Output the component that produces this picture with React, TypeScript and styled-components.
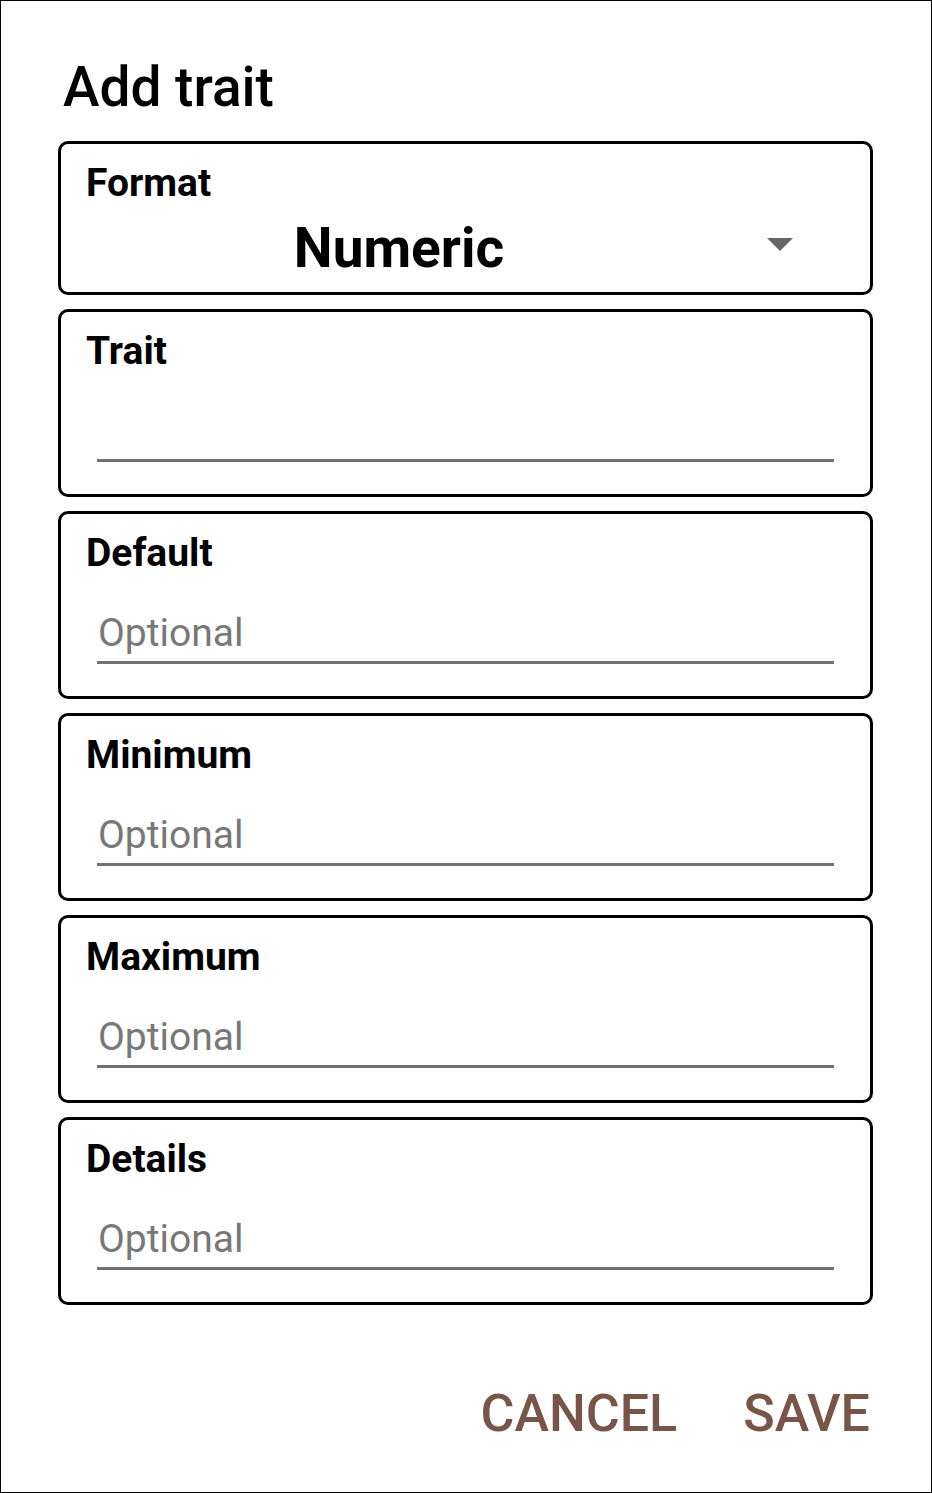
import * as React from "react";
import styled, { createGlobalStyle } from "styled-components";

const GlobalStyle = createGlobalStyle`
  html, body {
    margin: 0;
    padding: 0;
    background: #ffffff;
  }
  * {
    box-sizing: border-box;
  }
`;

const Screen = styled.div`
  width: 932px;
  height: 1493px;
  border: 1px solid #000;
  padding: 54px 58px 0 57px;
  font-family: Roboto, "Noto Sans", sans-serif;
  color: #000;
  display: flex;
  flex-direction: column;
`;

const Title = styled.h1`
  margin: 0 0 22px 0;
  padding-left: 5px;
  font-size: 55px;
  line-height: 64px;
  font-weight: 500;
`;

const Fields = styled.div`
  display: flex;
  flex-direction: column;
  gap: 14px;
`;

const Card = styled.div<{ $height: number }>`
  height: ${({ $height }) => $height}px;
  border: 3px solid #000;
  border-radius: 10px;
  padding: 16px 25px 0 25px;
  display: flex;
  flex-direction: column;
`;

const Label = styled.div`
  font-size: 39px;
  line-height: 46px;
  font-weight: 700;
`;

const SpinnerRow = styled.div`
  margin-top: 10px;
  display: flex;
  align-items: center;
  height: 64px;
`;

const SpinnerValue = styled.div`
  flex: 1;
  text-align: center;
  font-size: 55px;
  line-height: 64px;
  font-weight: 700;
`;

const Arrow = styled.svg`
  width: 26px;
  height: 13px;
  margin: -7px 52px 0 55px;
  display: block;
`;

const TextInput = styled.input`
  margin: 33px 11px 0 11px;
  padding: 0 0 4px 1px;
  height: 55px;
  border: none;
  border-bottom: 3px solid #727272;
  outline: none;
  background: transparent;
  font-family: Roboto, "Noto Sans", sans-serif;
  font-size: 39px;
  line-height: 48px;
  color: #000;
  &::placeholder {
    color: #787878;
  }
`;

const Actions = styled.div`
  margin-top: 79px;
  display: flex;
  justify-content: flex-end;
  gap: 66px;
  padding-right: 3px;
`;

const ActionButton = styled.button`
  border: none;
  background: none;
  padding: 0;
  font-family: Roboto, "Noto Sans", sans-serif;
  font-size: 52px;
  line-height: 60px;
  font-weight: 500;
  color: #795548;
  cursor: pointer;
`;

const fields = [
  { label: "Trait", placeholder: "" },
  { label: "Default", placeholder: "Optional" },
  { label: "Minimum", placeholder: "Optional" },
  { label: "Maximum", placeholder: "Optional" },
  { label: "Details", placeholder: "Optional" },
];

const App: React.FC = () => {
  return (
    <>
      <GlobalStyle />
      <Screen>
        <Title>Add trait</Title>
        <Fields>
          <Card $height={154}>
            <Label>Format</Label>
            <SpinnerRow>
              <SpinnerValue>Numeric</SpinnerValue>
              <Arrow viewBox="0 0 26 13">
                <polygon points="0,0 26,0 13,13" fill="#666666" />
              </Arrow>
            </SpinnerRow>
          </Card>
          {fields.map((f) => (
            <Card key={f.label} $height={188}>
              <Label>{f.label}</Label>
              <TextInput placeholder={f.placeholder} />
            </Card>
          ))}
        </Fields>
        <Actions>
          <ActionButton>CANCEL</ActionButton>
          <ActionButton>SAVE</ActionButton>
        </Actions>
      </Screen>
    </>
  );
};

export default App;
